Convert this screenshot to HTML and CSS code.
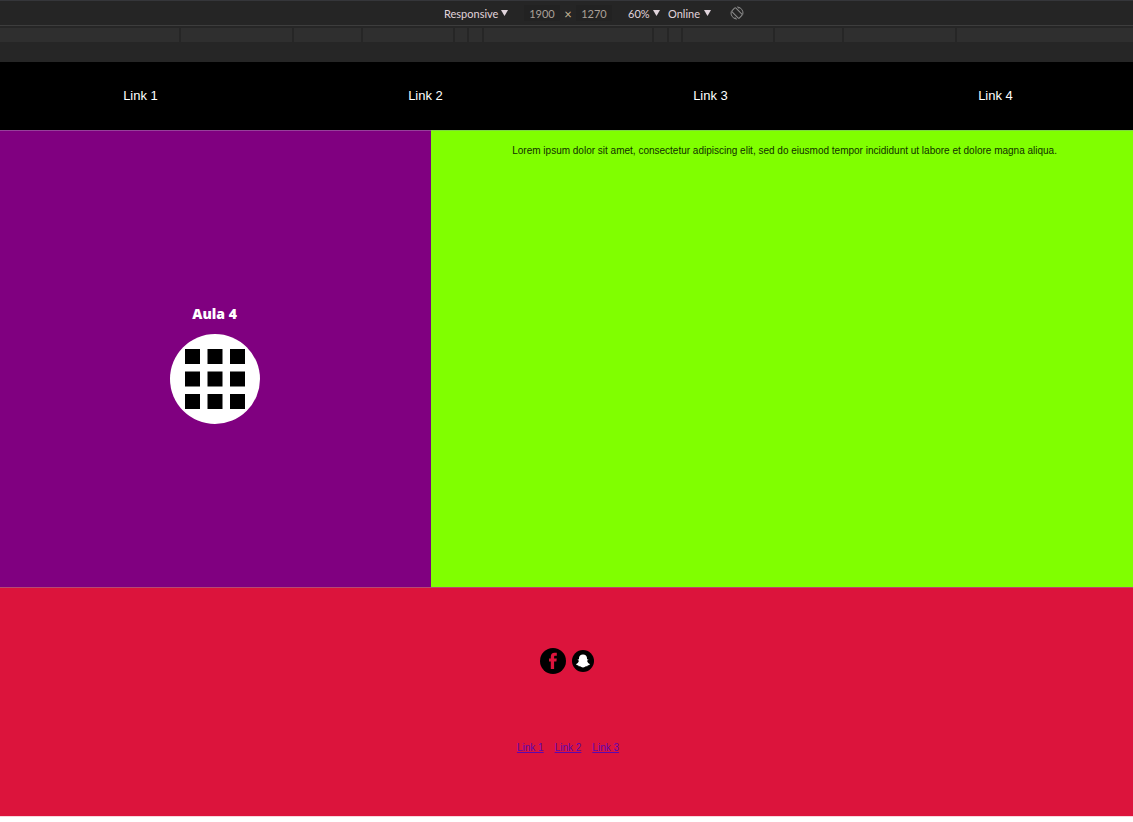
FILE: index.html
```html
<!DOCTYPE html>
<html lang="en">
<head>
<meta charset="utf-8">
<title>Aula 4</title>
<link rel="stylesheet" href="styles.css">
</head>
<body>
<div class="toolbar">
  <label class="picker picker-device"><select aria-label="Device"><option>Responsive</option></select><svg class="arrow" viewBox="0 0 7 6"><path d="M0 0h7L3.500 6z"/></svg></label>
  <div class="dimensions">
    <input class="dimension" aria-label="Width" value="1900">
    <span class="times">×</span>
    <input class="dimension" aria-label="Height" value="1270">
  </div>
  <label class="picker picker-zoom"><select aria-label="Zoom"><option>60%</option></select><svg class="arrow" viewBox="0 0 7 6"><path d="M0 0h7L3.500 6z"/></svg></label>
  <label class="picker picker-network"><select aria-label="Throttling"><option>Online</option></select><svg class="arrow" viewBox="0 0 7 6"><path d="M0 0h7L3.500 6z"/></svg></label>
  <button class="rotate" aria-label="Rotate"><svg viewBox="0 0 14 14"><g fill="none" stroke="#8c8c8c"><rect x="4.300" y="1.800" width="5.400" height="10.400" rx="1" transform="rotate(-45 7 7)"/><path d="M7.500 1A6 6 0 0 1 12.800 8.500M6.500 13A6 6 0 0 1 1.200 5.500M7.500 1l1.800 1.600M6.500 13l-1.800-1.600"/></g></svg></button>
</div>
<div class="ruler">
  <span></span><span></span><span></span><span></span><span></span><span></span><span></span><span></span><span></span><span></span><span></span><span></span><span></span>
</div>
<div class="viewport">
  <div class="page">
    <nav class="menu">
      <a href="#1">Link 1</a><a href="#2">Link 2</a><a href="#3">Link 3</a><a href="#4">Link 4</a>
    </nav>
    <main class="content">
      <aside class="side">
        <h1>Aula 4</h1>
        <svg class="logo" viewBox="0 0 90 90"><circle cx="45" cy="45" r="45" fill="#fff"/><path d="M15 15h15v15H15zM37.500 15h15v15h-15zM60 15h15v15H60zM15 37.500h15v15H15zM37.500 37.500h15v15h-15zM60 37.500h15v15H60zM15 60h15v15H15zM37.500 60h15v15h-15zM60 60h15v15H60z"/></svg>
      </aside>
      <section class="text">
        <p>Lorem ipsum dolor sit amet, consectetur adipiscing elit, sed do eiusmod tempor incididunt ut labore et dolore magna aliqua.</p>
      </section>
    </main>
    <footer class="footer">
      <div class="social">
        <a href="#facebook" aria-label="Facebook"><svg class="facebook" viewBox="0 0 26 26"><circle cx="13" cy="13" r="13"/><path fill="#dc143c" d="M10.800 21v-7.400H9v-3h1.800V8.700c0-2.500 1.300-3.900 3.700-3.900h2.300v3h-1.500c-.9 0-1.200.4-1.200 1.200v1.600h2.700l-.4 3h-2.300V21z"/></svg></a>
        <a href="#snapchat" aria-label="Snapchat"><svg class="snapchat" viewBox="0 0 22 22"><circle cx="11" cy="11" r="11"/><path fill="#fff" d="M11 4.500c-2.500 0-4 1.500-4 3.600v1.300l-1-.1c-.5.300-.2.900.9 1.400-.3 1.500-1.300 2.700-2.700 3.200-.2.700.8 1.200 2 1.400l.4.900c.8-.1 1.600-.1 2.300.5 1.300 1 2.900 1 4.200 0 .7-.6 1.500-.6 2.300-.5l.4-.9c1.200-.2 2.200-.7 2-1.400-1.400-.5-2.400-1.700-2.700-3.200 1.100-.5 1.400-1.100.9-1.400l-1 .1V8.100c0-2.100-1.500-3.600-4-3.600z"/></svg></a>
      </div>
      <div class="links">
        <a href="#1">Link 1</a><a href="#2">Link 2</a><a href="#3">Link 3</a>
      </div>
    </footer>
  </div>
</div>
</body>
</html>
```
FILE: styles.css
```css
* {
  box-sizing: border-box;
}

body {
  margin: 0;
  background: #fff;
  font-family: "Liberation Sans", Arial, sans-serif;
}

.toolbar {
  display: flex;
  align-items: center;
  justify-content: center;
  height: 26px;
  padding-left: 55px;
  border-top: 1px solid #35363a;
  border-bottom: 1px solid #3d3d3d;
  background: #252525;
  color: #e0d4dc;
  font: 11px/16px Lato, sans-serif;
}

.picker {
  display: flex;
  align-items: center;
  justify-content: space-between;
}

.picker select {
  appearance: none;
  padding: 2px 0 0;
  border: 0;
  background: none;
  color: inherit;
  font: inherit;
}

.picker-device {
  width: 64px;
  margin-right: 16px;
}

.picker-zoom {
  width: 32px;
  margin: 0 8px 0 16px;
}

.picker-network {
  width: 43px;
  margin-right: 19px;
}

.arrow {
  width: 7px;
  height: 6px;
  fill: #e0d4dc;
}

.dimensions {
  display: flex;
  align-items: center;
}

.dimension {
  width: 36px;
  height: 16px;
  padding: 2px 0 0;
  border: 0;
  background: #222;
  color: #aaa098;
  font: inherit;
  text-align: center;
}

.times {
  width: 16px;
  padding-top: 2px;
  color: #c8b898;
  font-size: 13px;
  text-align: center;
}

.rotate {
  width: 14px;
  height: 14px;
  padding: 0;
  border: 0;
  background: none;
}

.rotate svg {
  display: block;
}

.ruler {
  display: grid;
  grid-template-columns: 179fr 111px 67px 90px 12px 13px 168px 13px 12px 90px 67px 111px 176fr;
  gap: 2px;
  padding: 2px 0 20px;
  background: #262626;
}

.ruler span {
  height: 14px;
  background: #2f2f2f;
}

.viewport {
  overflow: hidden;
  border-bottom: 1px solid #f9d5dc;
}

.page {
  margin: 0 -5px 0 -2px;
}

.menu {
  display: grid;
  grid-template-columns: repeat(4, 1fr);
  padding: 24px 0;
  background: #000;
  text-align: center;
}

.menu a {
  color: #fff;
  font-size: 13px;
  line-height: 20px;
  text-decoration: none;
}

.content {
  display: grid;
  grid-template-columns: 38% 1fr;
  min-height: 457px;
}

.side {
  display: flex;
  flex-direction: column;
  align-items: center;
  justify-content: center;
  gap: 11px;
  padding-top: 10px;
  border-top: 1px solid #96409a;
  background: #800080;
}

.side h1 {
  margin: 0;
  color: #fff;
  font: 800 14px/18px "Open Sans", sans-serif;
}

.logo {
  width: 90px;
  height: 90px;
}

.text {
  padding: 14px 0;
  border-top: 1px solid #80d840;
  background: #80ff00;
  text-align: center;
}

.text p {
  margin: 0;
  color: #103000;
  font-size: 10px;
  line-height: 12px;
}

.footer {
  display: flex;
  flex-direction: column;
  align-items: center;
  gap: 68px;
  padding: 60px 0 62px;
  border-top: 1px solid #b84870;
  background: #dc143c;
}

.social {
  display: flex;
  align-items: center;
  gap: 6px;
  padding-right: 2px;
}

.social svg {
  display: block;
}

.facebook {
  width: 26px;
  height: 26px;
}

.snapchat {
  width: 22px;
  height: 22px;
}

.links {
  display: flex;
  gap: 11px;
  font-size: 10px;
  line-height: 12px;
}

.links a {
  color: #5c08b0;
}
```
